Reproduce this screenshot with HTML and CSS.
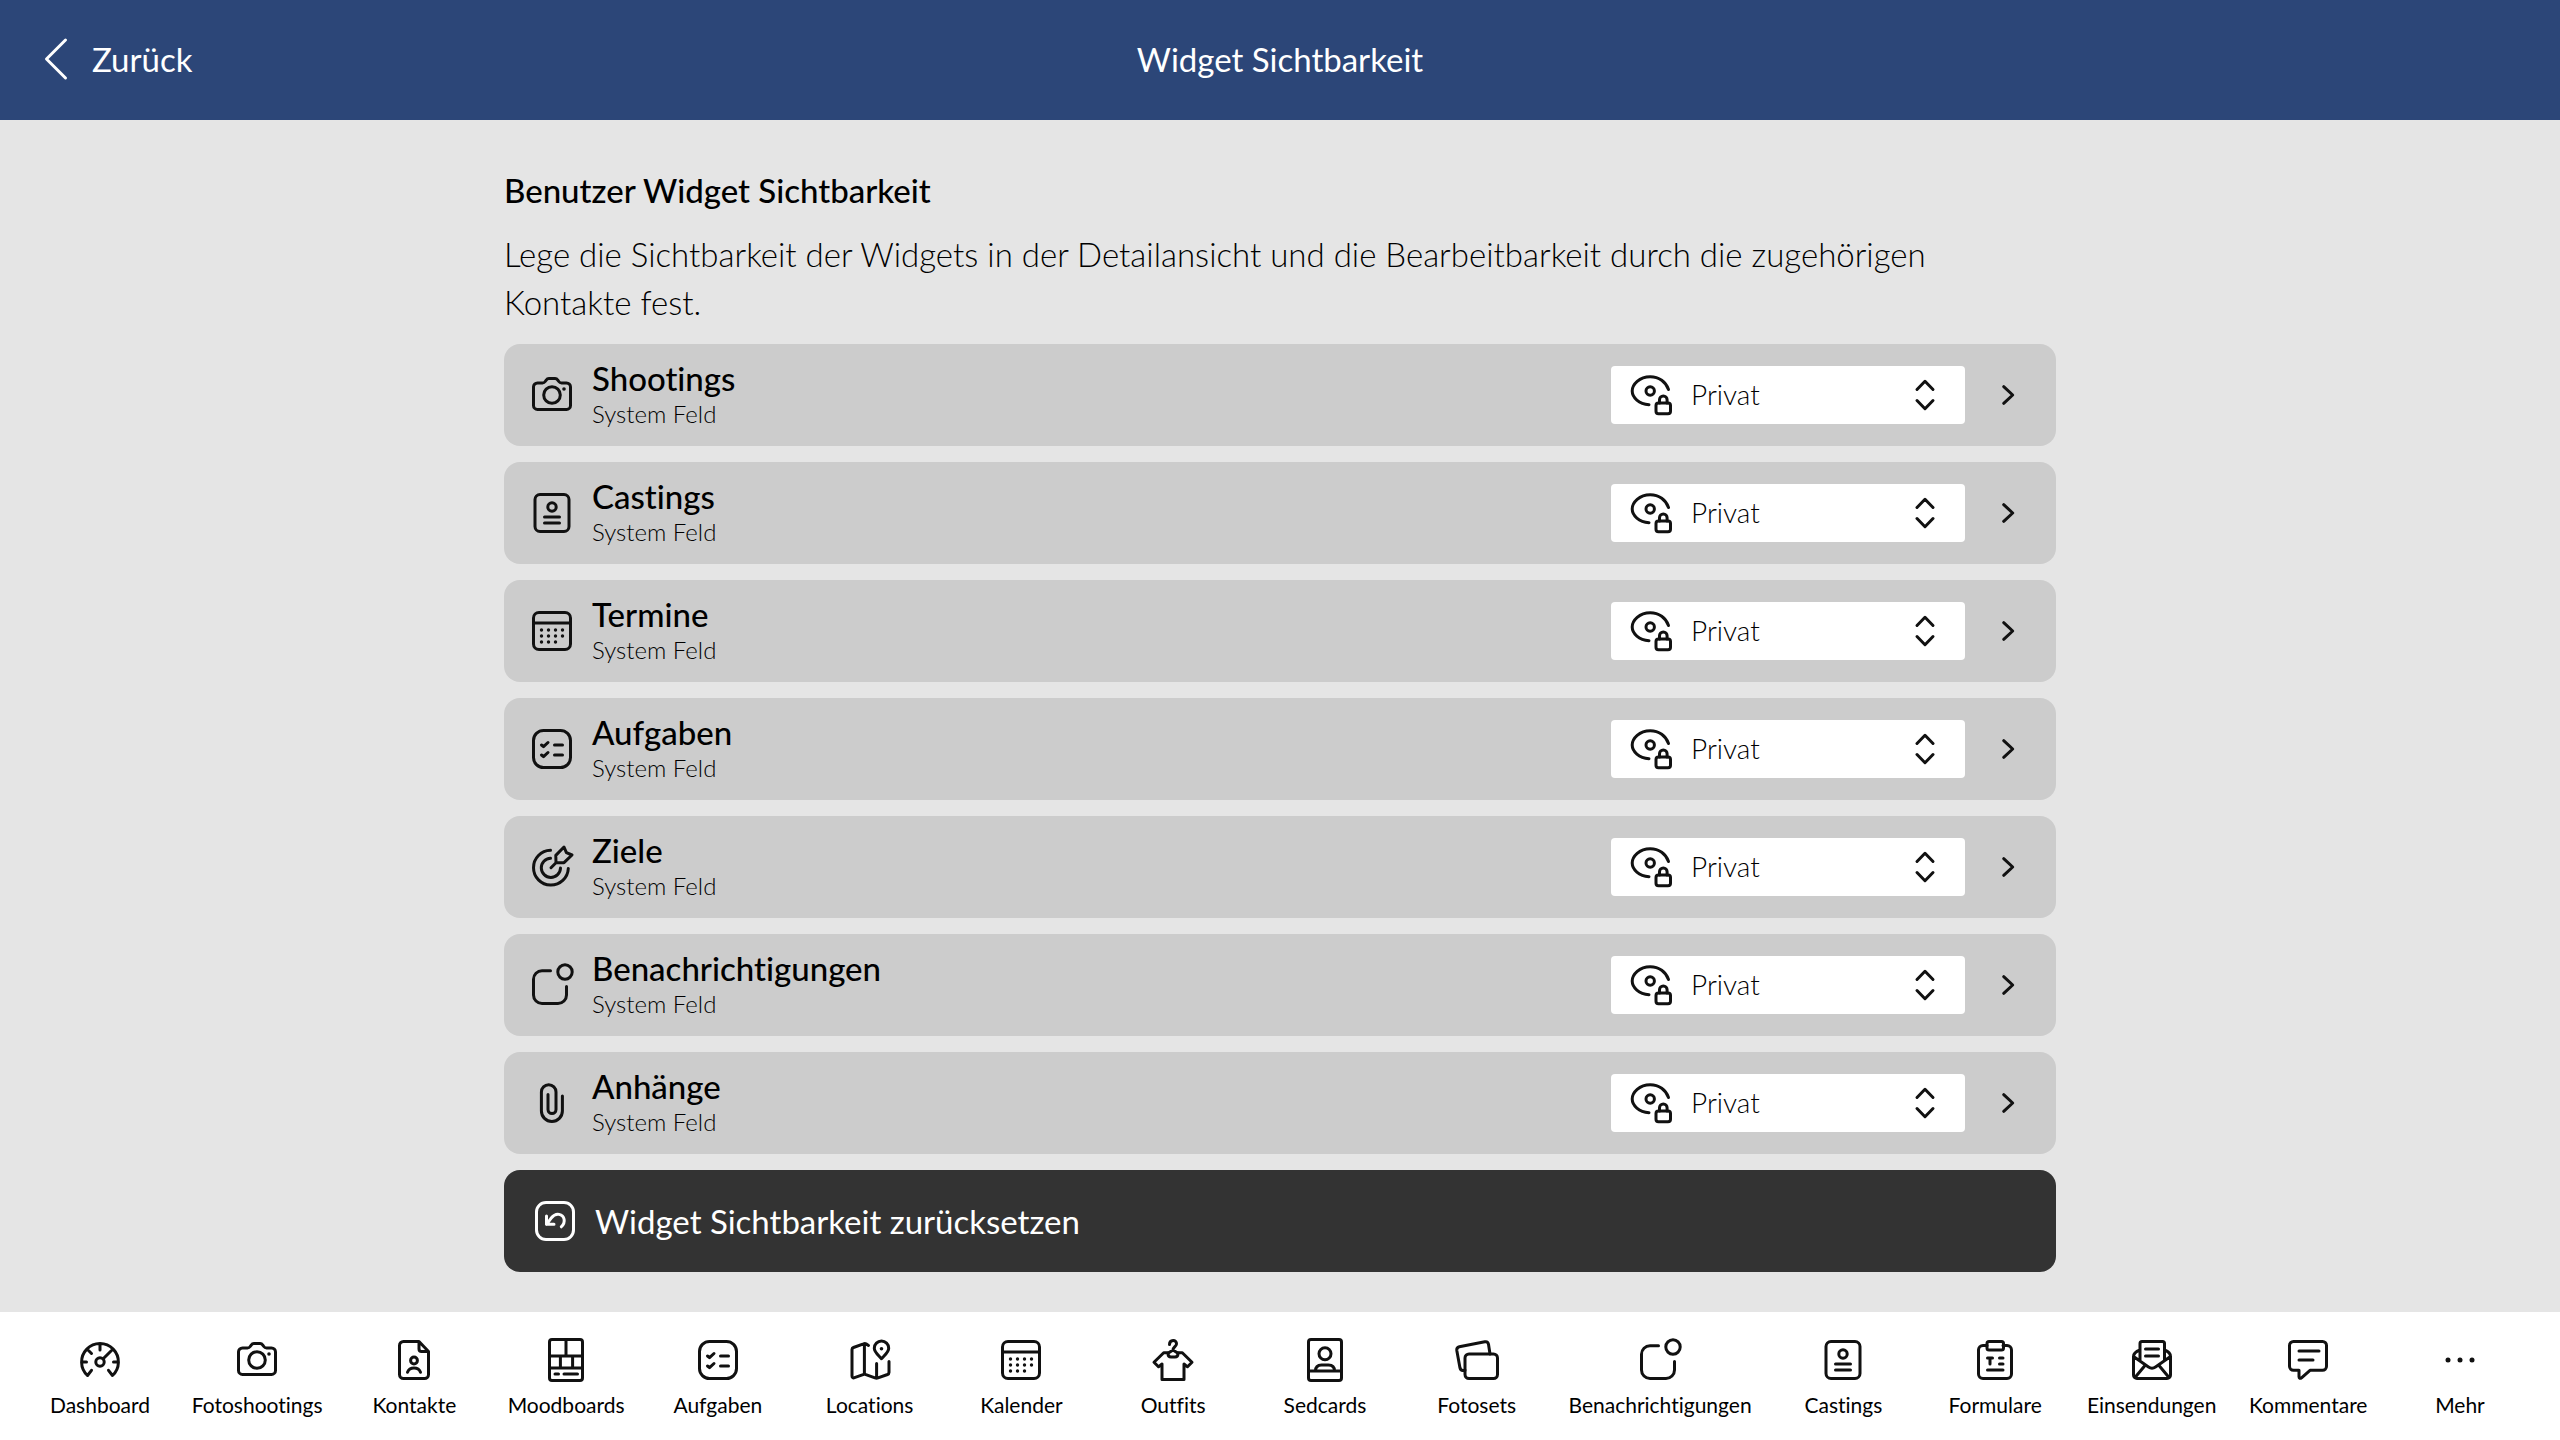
FILE: index.html
```html
<!DOCTYPE html>
<html lang="de">
<head>
    <meta charset="UTF-8">
    <meta name="viewport" content="width=device-width, initial-scale=1.0">
    <title>Widget Sichtbarkeit</title>
    <link rel="stylesheet" href="styles.css">
</head>
<body>
    <!-- Icon sprite -->
    <svg class="sprite" aria-hidden="true">
        <symbol id="i-camera" viewBox="0 0 48 48">
            <path d="M10 12h4.500c1.200 0 2-.5 2.700-1.500l1-1.400c.7-1 1.500-1.500 2.700-1.500h6.200c1.200 0 2 .5 2.700 1.500l1 1.400c.7 1 1.500 1.500 2.700 1.500H38.500a4 4 0 0 1 4 4v18.400a4 4 0 0 1-4 4h-29a4 4 0 0 1-4-4V16a4 4 0 0 1 4-4z"/>
            <circle cx="24" cy="24" r="8.300"/>
            <circle class="dot" cx="36" cy="18" r="1.800"/>
        </symbol>
        <symbol id="i-casting" viewBox="0 0 48 48">
            <rect x="7" y="5.500" width="34" height="37" rx="5"/>
            <circle cx="24" cy="18" r="4.200"/>
            <path d="M16.500 28h15M16.500 34h15"/>
        </symbol>
        <symbol id="i-calendar" viewBox="0 0 48 48">
            <rect x="5.500" y="5.500" width="37" height="37" rx="5.500"/>
            <path d="M5.500 16h37"/>
            <g class="dot">
                <circle cx="13.500" cy="23" r="1.700"/><circle cx="20.500" cy="23" r="1.700"/><circle cx="27.500" cy="23" r="1.700"/><circle cx="34.500" cy="23" r="1.700"/>
                <circle cx="13.500" cy="29" r="1.700"/><circle cx="20.500" cy="29" r="1.700"/><circle cx="27.500" cy="29" r="1.700"/><circle cx="34.500" cy="29" r="1.700"/>
                <circle cx="13.500" cy="35" r="1.700"/><circle cx="20.500" cy="35" r="1.700"/><circle cx="27.500" cy="35" r="1.700"/>
            </g>
        </symbol>
        <symbol id="i-tasks" viewBox="0 0 48 48">
            <rect x="5.500" y="5.500" width="37" height="37" rx="10"/>
            <path d="M13.500 20l2 1.700 4.500-4.200M26.500 20h8M13.500 30l2 1.700 4.500-4.200M26.500 30h8"/>
        </symbol>
        <symbol id="i-target" viewBox="0 0 48 48">
            <path d="M22.500 7.300A17.400 17.400 0 1 0 40.300 25.500M22.500 15.200A9.600 9.600 0 1 0 32.500 25M23 24.700l5-5-.2-7.300L36 4l2.400 5.600L44 12l-8 7.700h-8"/>
        </symbol>
        <symbol id="i-notify" viewBox="0 0 48 48">
            <path d="M22.500 9.700H14a8.500 8.500 0 0 0-8.500 8.500V34a8.500 8.500 0 0 0 8.500 8.500h16a8.500 8.500 0 0 0 8.500-8.500v-8.500"/>
            <circle cx="37" cy="11" r="7.200"/>
        </symbol>
        <symbol id="i-clip" viewBox="0 0 48 48">
            <path d="M20 15.500v15a4 4 0 0 0 8 0V13a7.300 7.300 0 0 0-14.600 0v19a10.500 10.500 0 0 0 21 0V17"/>
        </symbol>
        <symbol id="i-reset" viewBox="0 0 48 48">
            <rect x="5.500" y="5.500" width="37" height="37" rx="9.500"/>
            <path d="M15.500 19v8.300H23M15.500 27.300l4.500-6c2.500-3 5.300-4.500 8-3.900 5.600 1.200 7.200 7.600 2.300 12.400"/>
        </symbol>
        <symbol id="i-private" viewBox="0 0 48 48">
            <path d="M41.500 18.500C39 11 32 5.700 23.200 5.700 12.500 5.700 5.200 13.500 5.200 20S12 33 22 33.700"/>
            <circle cx="23.200" cy="20" r="4.200"/>
            <rect x="29" y="32" width="14.500" height="10.700" rx="2.500"/>
            <path d="M32.500 32v-3.200a3.800 3.800 0 0 1 7.600 0V32"/>
        </symbol>
        <symbol id="i-updown" viewBox="0 0 48 48">
            <path d="M16 18.500l8-8.200 8 8.200M16 29.500l8 8.200 8-8.200"/>
        </symbol>
        <symbol id="i-next" viewBox="0 0 48 48">
            <path d="M19.700 15.700L28.700 24l-9 8.300"/>
        </symbol>
        <symbol id="i-back" viewBox="0 0 48 48">
            <path d="M33.500 5L14.500 24l19 19"/>
        </symbol>
        <symbol id="i-gauge" viewBox="0 0 48 48">
            <path d="M15.500 34.300l-4 5.200A18.400 18.400 0 1 1 36.500 39.500l-4-5.200M24 8v6M6.500 26h4M37.500 26h4M11.500 13.500l4 4M27.200 22.800l9.300-9.300"/>
            <circle cx="24" cy="26" r="4.200"/>
        </symbol>
        <symbol id="i-contact" viewBox="0 0 48 48">
            <path d="M29 5.500H13.500a4 4 0 0 0-4 4v29a4 4 0 0 0 4 4h21a4 4 0 0 0 4-4V15.500zM29 5.500V13a2.500 2.500 0 0 0 2.500 2.500h7"/>
            <circle cx="24" cy="24.500" r="3.400"/>
            <path d="M17.500 36.300c1-2.800 3.500-4.300 6.500-4.300s5.500 1.500 6.500 4.300"/>
        </symbol>
        <symbol id="i-mood" viewBox="0 0 48 48">
            <rect x="7.500" y="3.500" width="33" height="41" rx="2.500"/>
            <path d="M7.500 20h33M7.500 32h33M24 3.500V20M18.400 20v12M30.600 20v12M13 38h3.500M22 38h13.500"/>
        </symbol>
        <symbol id="i-map" viewBox="0 0 48 48">
            <path d="M22.500 9.500l-2.500-1.700c-1-.5-1.500-.4-2.500 0L7.500 11.500c-1 .4-1.500 1-1.500 2V40c0 1.500 1 2.300 2.500 1.700l10-3.500 10.500 3.700c1 .4 2 .4 3 0l9.500-3.400c1-.4 1.500-1 1.500-2V25.500M18.400 8v30M30.600 27.500V42"/>
            <path d="M35.500 22.700c3-3.500 7.200-6.500 7.200-10.500a7.200 7.200 0 0 0-14.400 0c0 4 4.200 7 7.200 10.500z"/>
            <circle class="dot" cx="35.500" cy="12.700" r="1.800"/>
        </symbol>
        <symbol id="i-outfit" viewBox="0 0 48 48">
            <path d="M20.500 8.500c0-5.200 7.300-5.200 7-.5-.2 2.400-3.500 3-3.500 6M19 17.300l5-3.300 5 3.300c0 2-.8 3.700-3 3.700h-4c-2.200 0-3-1.700-3-3.700z"/>
            <path d="M19 16.700h-4.300L5 26.300l4.500 4.500L13 28v15.400h22V28l3.500 2.800 4.500-4.500-9.700-9.600H29"/>
        </symbol>
        <symbol id="i-sedcard" viewBox="0 0 48 48">
            <rect x="7.500" y="3.500" width="33" height="41" rx="2.500"/>
            <circle cx="24" cy="17.700" r="6"/>
            <path d="M7.500 35h33M14.500 35c0-4 2.500-6 6-6h7c3.500 0 6 2 6 6"/>
        </symbol>
        <symbol id="i-fotos" viewBox="0 0 48 48">
            <rect x="12" y="18" width="32.500" height="24.500" rx="4"/>
            <path d="M12 34.200l-1.500.2c-2 .3-3-.4-3.500-2.500L3.800 14.500c-.3-2 .5-3.200 2.500-3.700l25.500-5c2-.4 3.300.5 3.700 2.500L37 18"/>
        </symbol>
        <symbol id="i-form" viewBox="0 0 48 48">
            <path d="M16 9.500h-4a4.500 4.500 0 0 0-4.500 4.500v24a4.500 4.500 0 0 0 4.500 4.500h24a4.500 4.500 0 0 0 4.500-4.500V14A4.500 4.500 0 0 0 36 9.500h-4"/>
            <rect x="16" y="5.500" width="16.500" height="8.500" rx="2"/>
            <path d="M16.500 22h5M19 22v6M28.500 22H32M28.500 28H32M16.500 34h15.500"/>
        </symbol>
        <symbol id="i-mail" viewBox="0 0 48 48">
            <path d="M12 24.500V7.500a2 2 0 0 1 2-2h20.500a2 2 0 0 1 2 2v17M12 14c-4 1.500-6.500 3.500-6.500 6.500V39a3.500 3.500 0 0 0 3.500 3.500h30a3.500 3.500 0 0 0 3.500-3.500V20.500c0-3-2-5-6-6.500M5.500 20.500l15 10.500c2.500 1.700 4.500 1.700 7 0l15-10.500M7 41.500L17 29.500M41 41.500L31 29.500M17.500 13h13M17.500 20h13"/>
        </symbol>
        <symbol id="i-comment" viewBox="0 0 48 48">
            <path d="M9.500 5.500h29a4 4 0 0 1 4 4v20.800a4 4 0 0 1-4 4H26l-8.500 7.500c-1.300 1-2.500.5-2.500-1v-6.500H9.500a4 4 0 0 1-4-4V9.500a4 4 0 0 1 4-4zM15 15h20M15 24h14"/>
        </symbol>
        <symbol id="i-more" viewBox="0 0 48 48">
            <g class="dot"><circle cx="12" cy="24" r="2.500"/><circle cx="24" cy="24" r="2.500"/><circle cx="36" cy="24" r="2.500"/></g>
        </symbol>
    </svg>

    <header class="topbar">
        <button class="back" type="button"><svg class="icon"><use href="#i-back"/></svg>Zurück</button>
        <h1>Widget Sichtbarkeit</h1>
    </header>

    <main class="content">
        <h2>Benutzer Widget Sichtbarkeit</h2>
        <p class="intro">Lege die Sichtbarkeit der Widgets in der Detailansicht und die Bearbeitbarkeit durch die zugehörigen Kontakte fest.</p>

        <div class="widgets">
            <div class="widget">
                <svg class="icon"><use href="#i-camera"/></svg>
                <label class="label" for="w-shootings"><span class="name">Shootings</span><span class="sub">System Feld</span></label>
                <div class="picker">
                    <svg class="icon"><use href="#i-private"/></svg>
                    <select id="w-shootings"><option>Privat</option></select>
                    <svg class="icon"><use href="#i-updown"/></svg>
                </div>
                <button class="next" type="button" aria-label="Shootings öffnen"><svg class="icon"><use href="#i-next"/></svg></button>
            </div>
            <div class="widget">
                <svg class="icon"><use href="#i-casting"/></svg>
                <label class="label" for="w-castings"><span class="name">Castings</span><span class="sub">System Feld</span></label>
                <div class="picker">
                    <svg class="icon"><use href="#i-private"/></svg>
                    <select id="w-castings"><option>Privat</option></select>
                    <svg class="icon"><use href="#i-updown"/></svg>
                </div>
                <button class="next" type="button" aria-label="Castings öffnen"><svg class="icon"><use href="#i-next"/></svg></button>
            </div>
            <div class="widget">
                <svg class="icon"><use href="#i-calendar"/></svg>
                <label class="label" for="w-termine"><span class="name">Termine</span><span class="sub">System Feld</span></label>
                <div class="picker">
                    <svg class="icon"><use href="#i-private"/></svg>
                    <select id="w-termine"><option>Privat</option></select>
                    <svg class="icon"><use href="#i-updown"/></svg>
                </div>
                <button class="next" type="button" aria-label="Termine öffnen"><svg class="icon"><use href="#i-next"/></svg></button>
            </div>
            <div class="widget">
                <svg class="icon"><use href="#i-tasks"/></svg>
                <label class="label" for="w-aufgaben"><span class="name">Aufgaben</span><span class="sub">System Feld</span></label>
                <div class="picker">
                    <svg class="icon"><use href="#i-private"/></svg>
                    <select id="w-aufgaben"><option>Privat</option></select>
                    <svg class="icon"><use href="#i-updown"/></svg>
                </div>
                <button class="next" type="button" aria-label="Aufgaben öffnen"><svg class="icon"><use href="#i-next"/></svg></button>
            </div>
            <div class="widget">
                <svg class="icon"><use href="#i-target"/></svg>
                <label class="label" for="w-ziele"><span class="name">Ziele</span><span class="sub">System Feld</span></label>
                <div class="picker">
                    <svg class="icon"><use href="#i-private"/></svg>
                    <select id="w-ziele"><option>Privat</option></select>
                    <svg class="icon"><use href="#i-updown"/></svg>
                </div>
                <button class="next" type="button" aria-label="Ziele öffnen"><svg class="icon"><use href="#i-next"/></svg></button>
            </div>
            <div class="widget">
                <svg class="icon"><use href="#i-notify"/></svg>
                <label class="label" for="w-benachrichtigungen"><span class="name">Benachrichtigungen</span><span class="sub">System Feld</span></label>
                <div class="picker">
                    <svg class="icon"><use href="#i-private"/></svg>
                    <select id="w-benachrichtigungen"><option>Privat</option></select>
                    <svg class="icon"><use href="#i-updown"/></svg>
                </div>
                <button class="next" type="button" aria-label="Benachrichtigungen öffnen"><svg class="icon"><use href="#i-next"/></svg></button>
            </div>
            <div class="widget">
                <svg class="icon"><use href="#i-clip"/></svg>
                <label class="label" for="w-anhaenge"><span class="name">Anhänge</span><span class="sub">System Feld</span></label>
                <div class="picker">
                    <svg class="icon"><use href="#i-private"/></svg>
                    <select id="w-anhaenge"><option>Privat</option></select>
                    <svg class="icon"><use href="#i-updown"/></svg>
                </div>
                <button class="next" type="button" aria-label="Anhänge öffnen"><svg class="icon"><use href="#i-next"/></svg></button>
            </div>
            <button class="reset" type="button"><svg class="icon"><use href="#i-reset"/></svg>Widget Sichtbarkeit zurücksetzen</button>
        </div>
    </main>

    <nav class="tabbar">
        <a href="#"><svg class="icon"><use href="#i-gauge"/></svg>Dashboard</a>
        <a href="#"><svg class="icon"><use href="#i-camera"/></svg>Fotoshootings</a>
        <a href="#"><svg class="icon"><use href="#i-contact"/></svg>Kontakte</a>
        <a href="#"><svg class="icon"><use href="#i-mood"/></svg>Moodboards</a>
        <a href="#"><svg class="icon"><use href="#i-tasks"/></svg>Aufgaben</a>
        <a href="#"><svg class="icon"><use href="#i-map"/></svg>Locations</a>
        <a href="#"><svg class="icon"><use href="#i-calendar"/></svg>Kalender</a>
        <a href="#"><svg class="icon"><use href="#i-outfit"/></svg>Outfits</a>
        <a href="#"><svg class="icon"><use href="#i-sedcard"/></svg>Sedcards</a>
        <a href="#"><svg class="icon"><use href="#i-fotos"/></svg>Fotosets</a>
        <a href="#"><svg class="icon"><use href="#i-notify"/></svg>Benachrichtigungen</a>
        <a href="#"><svg class="icon"><use href="#i-casting"/></svg>Castings</a>
        <a href="#"><svg class="icon"><use href="#i-form"/></svg>Formulare</a>
        <a href="#"><svg class="icon"><use href="#i-mail"/></svg>Einsendungen</a>
        <a href="#"><svg class="icon"><use href="#i-comment"/></svg>Kommentare</a>
        <a href="#"><svg class="icon"><use href="#i-more"/></svg>Mehr</a>
    </nav>
</body>
</html>
```

FILE: styles.css
```css
* {
    box-sizing: border-box;
}
body {
    margin: 0;
    min-height: 100vh;
    display: flex;
    flex-direction: column;
    background-color: #e5e5e5;
    color: #000;
    font-family: Lato, "Open Sans", sans-serif;
    font-size: 33px;
    font-variant-ligatures: none;
    line-height: 48px;
}
button,
select {
    font: inherit;
    font-variant-ligatures: none;
    color: inherit;
    background: none;
    border: none;
    padding: 0;
    cursor: pointer;
}
h1,
h2,
p {
    margin: 0;
    font-size: inherit;
}
.sprite {
    display: none;
}
.icon {
    width: 48px;
    height: 48px;
    flex: none;
    fill: none;
    stroke: #111;
    stroke-width: 3px;
    stroke-linecap: round;
    stroke-linejoin: round;
}
.dot {
    fill: #111;
    stroke: none;
}

/* Header */
.topbar {
    display: grid;
    grid-template-columns: 1fr auto 1fr;
    align-items: center;
    height: 120px;
    padding: 0 32px 2px;
    background-color: #2c4678;
    color: #fff;
}
.topbar .icon,
.reset .icon {
    stroke: #fff;
}
.back {
    display: flex;
    align-items: center;
    gap: 12px;
    justify-self: start;
}
.topbar h1 {
    font-weight: 400;
}

/* Content */
.content {
    flex: 1;
    width: 100%;
    max-width: 1600px;
    margin: 0 auto;
    padding: 46px 24px 40px;
}
.content h2 {
    font-weight: 500;
    margin-bottom: 16px;
}
.intro {
    font-weight: 300;
    margin-bottom: 18px;
}
.widgets {
    display: flex;
    flex-direction: column;
    gap: 16px;
}
.widget {
    display: flex;
    align-items: center;
    padding: 14px 24px;
    background-color: #ccc;
    border-radius: 16px;
}
.label {
    flex: 1;
    display: flex;
    flex-direction: column;
    margin-left: 16px;
    padding-bottom: 2px;
}
.name {
    font-weight: 500;
    line-height: 40px;
}
.sub {
    font-size: 24px;
    font-weight: 300;
    line-height: 32px;
}
.picker {
    display: flex;
    align-items: center;
    gap: 16px;
    width: 354px;
    height: 58px;
    padding: 0 16px;
    background-color: #fff;
    border-radius: 4px;
}
.picker select {
    flex: 1;
    min-width: 0;
    padding-bottom: 2px;
    appearance: none;
    font-size: 28px;
    font-weight: 300;
    line-height: 40px;
}
.next {
    display: flex;
    margin-left: 19px;
}
.reset {
    display: flex;
    align-items: center;
    gap: 16px;
    padding: 27px;
    background-color: #333;
    color: #fff;
    border-radius: 16px;
}

/* Bottom navigation */
.tabbar {
    display: flex;
    justify-content: space-between;
    padding: 24px 40px 18px;
    background-color: #fff;
}
.tabbar a {
    display: flex;
    flex-direction: column;
    align-items: center;
    gap: 4px;
    min-width: 120px;
    color: inherit;
    font-size: 21px;
    font-weight: 400;
    line-height: 34px;
    text-decoration: none;
}
```
